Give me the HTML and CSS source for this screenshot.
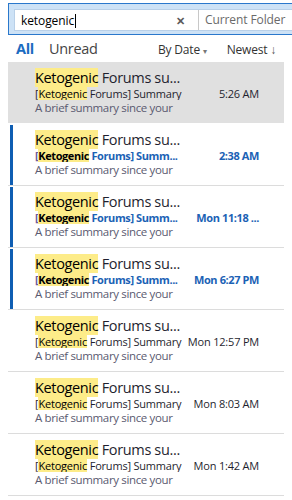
FILE: index.html
```html
<!DOCTYPE html>
<html lang="en">

<head>
    <meta charset="UTF-8">
    <meta name="viewport" content="width=device-width, initial-scale=1.0">
    <title>Search results</title>
    <link rel="stylesheet" href="styles.css">
</head>

<body>
    <div id="search">
        <div class="field">
            <span class="query">ketogenic<i class="caret"></i></span>
            <span class="clear">&#x2715;</span>
            <span class="scope">Current Folder</span>
        </div>
    </div>

    <div id="tabs">
        <span class="tab active">All</span>
        <span class="tab">Unread</span>
        <span class="sort">By Date <small>&#9662;</small></span>
        <span class="order">Newest <b>&#8595;</b></span>
    </div>

    <ul id="maillist">
        <li class="mail selected">
            <div class="title"><mark>Ketogenic</mark> Forums su...</div>
            <div class="line"><span class="subject">[<mark>Ketogenic</mark> Forums] Summary</span><span class="time">5:26 AM</span></div>
            <div class="preview">A brief summary since your</div>
        </li>
        <li class="mail unread">
            <div class="title"><mark>Ketogenic</mark> Forums su...</div>
            <div class="line"><span class="subject"><em>[</em><mark>Ketogenic</mark> Forums] Summ...</span><span class="time">2:38 AM</span></div>
            <div class="preview">A brief summary since your</div>
        </li>
        <li class="mail unread">
            <div class="title"><mark>Ketogenic</mark> Forums su...</div>
            <div class="line"><span class="subject"><em>[</em><mark>Ketogenic</mark> Forums] Summ...</span><span class="time">Mon 11:18 ...</span></div>
            <div class="preview">A brief summary since your</div>
        </li>
        <li class="mail unread">
            <div class="title"><mark>Ketogenic</mark> Forums su...</div>
            <div class="line"><span class="subject"><em>[</em><mark>Ketogenic</mark> Forums] Summ...</span><span class="time">Mon 6:27 PM</span></div>
            <div class="preview">A brief summary since your</div>
        </li>
        <li class="mail">
            <div class="title"><mark>Ketogenic</mark> Forums su...</div>
            <div class="line"><span class="subject">[<mark>Ketogenic</mark> Forums] Summary</span><span class="time">Mon 12:57 PM</span></div>
            <div class="preview">A brief summary since your</div>
        </li>
        <li class="mail">
            <div class="title"><mark>Ketogenic</mark> Forums su...</div>
            <div class="line"><span class="subject">[<mark>Ketogenic</mark> Forums] Summary</span><span class="time">Mon 8:03 AM</span></div>
            <div class="preview">A brief summary since your</div>
        </li>
        <li class="mail">
            <div class="title"><mark>Ketogenic</mark> Forums su...</div>
            <div class="line"><span class="subject">[<mark>Ketogenic</mark> Forums] Summary</span><span class="time">Mon 1:42 AM</span></div>
            <div class="preview">A brief summary since your</div>
        </li>
        <li class="mail">
            <div class="title"><mark>Ketogenic</mark></div>
        </li>
    </ul>
</body>

</html>
```

FILE: styles.css
```css
* {
    margin: 0;
    padding: 0;
}

body {
    width: 292px;
    height: 500px;
    overflow: hidden;
    background-color: #fff;
    font-family: "Open Sans", "Noto Sans", sans-serif;
    color: #1f1f2f;
}

#search {
    margin: 3px 0 0 8px;
    padding: 5px 0 3px 5px;
    background-color: #cde2f6;
    border: 1px solid #2a78cc;
    border-right: none;
}

.field {
    display: flex;
    align-items: center;
    height: 20px;
    background-color: #fff;
    border: 1px solid #b9d0e8;
    border-right: none;
    font-size: 12px;
    letter-spacing: -0.1px;
}

.query {
    width: 155px;
    padding-left: 6px;
    color: #000;
}

.caret {
    display: inline-block;
    width: 1px;
    height: 14px;
    margin-left: 1px;
    background-color: #000;
    vertical-align: -3px;
}

.clear {
    width: 22px;
    font-size: 11px;
    font-weight: bold;
    color: #5a5a5a;
}

.scope {
    flex: 1;
    height: 100%;
    padding-left: 6px;
    line-height: 20px;
    border-left: 1px solid #c8c8c8;
    color: #6a6a6a;
    white-space: nowrap;
}

#tabs {
    display: flex;
    align-items: baseline;
    height: 23px;
    padding: 4px 0 0 16px;
}

.tab {
    font-size: 14.5px;
    letter-spacing: -0.3px;
    color: #444;
    margin-right: 15px;
}

.tab.active {
    font-weight: bold;
    color: #1c6cc1;
}

.sort,
.order {
    font-size: 12px;
    letter-spacing: -0.2px;
    color: #333;
}

.sort {
    margin-left: auto;
    margin-right: 20px;
}

.sort small {
    font-size: 8px;
    color: #777;
}

.order {
    margin-right: 16px;
}

.order b {
    font-weight: normal;
    color: #555;
}

#maillist {
    list-style: none;
    width: 276px;
    margin-left: 8px;
}

.mail {
    position: relative;
    height: 62px;
    padding: 6px 25px 0 27px;
    border-bottom: 1px solid #dcdcdc;
    box-sizing: border-box;
}

.mail.selected {
    background-color: #e0e0e0;
    border-bottom-color: #fff;
}

.mail.unread::before {
    content: "";
    position: absolute;
    left: 2px;
    top: 1px;
    bottom: 0;
    width: 3px;
    background-color: #0f5eb3;
}

mark {
    background-color: #fdec89;
    color: #000;
}

.title {
    font-size: 14.5px;
    letter-spacing: -0.35px;
    line-height: 19px;
    white-space: nowrap;
}

.line {
    display: flex;
    gap: 3px;
    font-size: 11px;
    letter-spacing: -0.2px;
    line-height: 13px;
    white-space: nowrap;
}

.subject {
    flex: 1;
    overflow: hidden;
}

.time {
    flex-shrink: 0;
}

.unread .line {
    font-weight: bold;
    letter-spacing: -0.4px;
    color: #1b62b5;
}

.unread .line em {
    font-style: normal;
    color: #6a5aa0;
}

.preview {
    font-size: 11.5px;
    letter-spacing: -0.35px;
    line-height: 16px;
    color: #5a5a70;
}
```
